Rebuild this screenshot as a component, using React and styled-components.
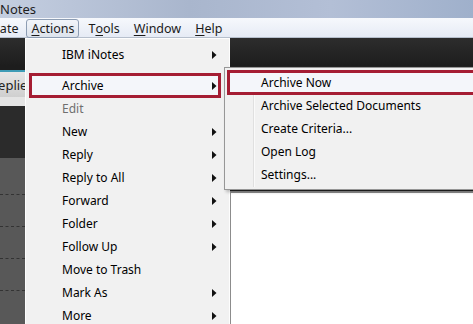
import React from 'react';
import styled, { createGlobalStyle } from 'styled-components';

const GlobalStyle = createGlobalStyle`
  html, body {
    margin: 0;
    padding: 0;
    overflow: hidden;
    background: #ffffff;
  }
`

const Screen = styled.div`
  position: relative;
  width: 473px;
  height: 324px;
  overflow: hidden;
  display: flex;
  flex-direction: column;
  font-family: 'Noto Sans', 'Open Sans', sans-serif;
  font-size: 12px;
  color: #000;
`

const TitleBar = styled.div`
  height: 18px;
  flex-shrink: 0;
  display: flex;
  align-items: center;
  background: linear-gradient(90deg, #c4cee0 0%, #a9b6cd 40%, #b3bfd6 70%, #9fb0cb 100%);
  font-size: 13px;
  color: #1e1e1e;
  line-height: 18px;
`

const MenuBar = styled.div`
  height: 20px;
  flex-shrink: 0;
  display: flex;
  align-items: stretch;
  background: linear-gradient(#f6f8fc, #e6ebf5);
  border-bottom: 1px solid #b6bfcc;
  box-sizing: border-box;
`

const MenuTitle = styled.div`
  display: flex;
  align-items: center;
  padding: 0 ${p => p.$pr ?? 7}px 0 ${p => p.$pl ?? 8}px;
  margin-left: ${p => p.$shift ?? 0}px;
  margin-right: ${p => p.$after ?? 0}px;
  font-size: 12.5px;
  color: #1a1a1a;
  border: 1px solid ${p => (p.$open ? '#8d9db3' : 'transparent')};
  border-radius: 3px;
  background: ${p => (p.$open ? 'linear-gradient(#f2f5fa, #dde3ec)' : 'none')};
  box-sizing: border-box;
  margin-top: 1px;
  height: 19px;
  white-space: nowrap;

  u {
    text-decoration-thickness: 1px;
    text-underline-offset: 2px;
  }
`

const Toolbar = styled.div`
  height: 28px;
  flex-shrink: 0;
  background: linear-gradient(#2d2d2d, #1d1d1d);
`

const Body = styled.div`
  flex: 1;
  display: flex;
`

const LeftPane = styled.div`
  width: 25px;
  display: flex;
  flex-direction: column;
  overflow: hidden;
`

const DarkStrip = styled.div`
  height: ${p => p.$h}px;
  flex-shrink: 0;
  background: ${p => p.$bg};
`

const TabButton = styled.div`
  height: 25px;
  flex-shrink: 0;
  background: linear-gradient(#e6e6e6, #cfcfcf);
  display: flex;
  align-items: center;
  font-size: 13px;
  color: #222;
  white-space: nowrap;
  overflow: hidden;
  text-indent: -10px;
`

const ListArea = styled.div`
  flex: 1;
  background: #585858;
  padding-top: 36px;
  display: flex;
  flex-direction: column;
  gap: 31px;
`

const ListRule = styled.div`
  height: 0;
  border-top: 1px dashed #333;
`

const MiddleGap = styled.div`
  width: 204px;
  background: #f1f1f1;
`

const RightPane = styled.div`
  flex: 1;
  display: flex;
  flex-direction: column;
`

const RightDark = styled.div`
  height: 125px;
  background: #232323;
`

const DocPanel = styled.div`
  flex: 1;
  background: #fff;
  border-left: 2px solid #8c8c8c;
  border-top: 2px solid #8c8c8c;
`

const Menu = styled.div`
  position: absolute;
  left: ${p => p.$x}px;
  top: ${p => p.$y}px;
  width: ${p => p.$w}px;
  height: ${p => (p.$h ? `${p.$h}px` : 'auto')};
  background: #f1f1f1;
  border: 1px solid ${p => p.$border};
  box-sizing: border-box;
  padding: ${p => p.$padTop}px 0 3px;
  display: flex;
  flex-direction: column;
  overflow: hidden;
  box-shadow: ${p => (p.$shadow ? '2px 2px 3px rgba(0,0,0,0.25)' : 'none')};
`

const Gutter = styled.div`
  position: absolute;
  top: 2px;
  bottom: 2px;
  left: ${p => p.$x}px;
  width: 1px;
  background: #e0e0e0;
  border-right: 1px solid #fafafa;
`

const Item = styled.div`
  position: relative;
  height: 23px;
  flex-shrink: 0;
  display: flex;
  align-items: center;
  padding-left: ${p => p.$indent}px;
  color: ${p => (p.$disabled ? '#6f6f6f' : '#000')};
  white-space: nowrap;
  z-index: 1;
`

const Highlight = styled.div`
  position: absolute;
  left: ${p => p.$l}px;
  right: ${p => p.$r}px;
  top: -1px;
  bottom: -1px;
  border: 3px solid #a51d33;
  background: #f4f6fa;
  z-index: -1;
`

const Arrow = styled.svg`
  position: absolute;
  right: ${p => p.$r}px;
  top: 8px;
`

const Separator = styled.div`
  height: 8px;
  flex-shrink: 0;
`

const mainItems = [
  { label: 'IBM iNotes', sub: true },
  { sep: true },
  { label: 'Archive', sub: true, hot: true },
  { label: 'Edit', disabled: true },
  { label: 'New', sub: true },
  { label: 'Reply', sub: true },
  { label: 'Reply to All', sub: true },
  { label: 'Forward', sub: true },
  { label: 'Folder', sub: true },
  { label: 'Follow Up', sub: true },
  { label: 'Move to Trash' },
  { label: 'Mark As', sub: true },
  { label: 'More', sub: true },
]

const archiveItems = [
  { label: 'Archive Now', hot: true },
  { label: 'Archive Selected Documents' },
  { label: 'Create Criteria...' },
  { label: 'Open Log' },
  { label: 'Settings...' },
]

function SubArrow() {
  return (
    <Arrow $r={12} width="5" height="8" viewBox="0 0 5 8">
      <polygon points="0,0 4.5,4 0,8" fill="#111" />
    </Arrow>
  )
}

export default function App() {
  return (
    <Screen>
      <GlobalStyle />
      <TitleBar>Notes</TitleBar>
      <MenuBar>
        <MenuTitle $pl={0} $pr={0} $shift={-21} $after={7}>Create</MenuTitle>
        <MenuTitle $open $pl={4} $pr={4}><u>A</u>ctions</MenuTitle>
        <MenuTitle $pl={8} $pr={4}>T<u>o</u>ols</MenuTitle>
        <MenuTitle $pl={8} $pr={4}><u>W</u>indow</MenuTitle>
        <MenuTitle $pl={8} $pr={4}><u>H</u>elp</MenuTitle>
      </MenuBar>
      <Toolbar />
      <Body>
        <LeftPane>
          <DarkStrip $h={4} $bg="#1d1d1d" />
          <DarkStrip $h={2} $bg="#3f9cb6" />
          <TabButton>Replies</TabButton>
          <DarkStrip $h={9} $bg="#e4e4e4" />
          <DarkStrip $h={52} $bg="#2b2b2b" />
          <ListArea>
            <ListRule />
            <ListRule />
            <ListRule />
            <ListRule />
          </ListArea>
        </LeftPane>
        <MiddleGap />
        <RightPane>
          <RightDark />
          <DocPanel />
        </RightPane>
      </Body>

      <Menu $x={25} $y={38} $w={205} $h={290} $padTop={4} $border="#fdfdfd">
        {mainItems.map((it, i) =>
          it.sep ? (
            <Separator key={i} />
          ) : (
            <Item key={i} $indent={36} $disabled={it.disabled}>
              {it.hot && <Highlight $l={3} $r={8} />}
              {it.label}
              {it.sub && <SubArrow />}
            </Item>
          )
        )}
      </Menu>

      <Menu $x={224} $y={67} $w={260} $padTop={3} $border="#979797" $shadow>
        <Gutter $x={28} />
        {archiveItems.map((it, i) => (
          <Item key={i} $indent={36}>
            {it.hot && <Highlight $l={2} $r={0} />}
            {it.label}
          </Item>
        ))}
      </Menu>
    </Screen>
  )
}
